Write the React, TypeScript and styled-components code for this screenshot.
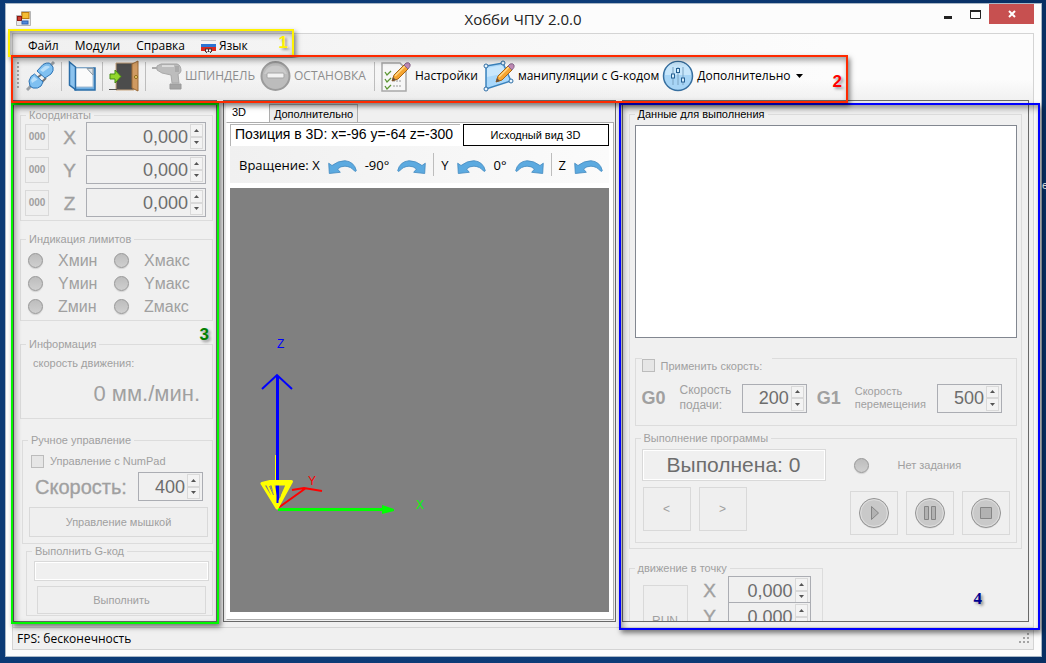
import React from "react";
import styled, { createGlobalStyle, css } from "styled-components";

const ui = `"Liberation Sans", Arial, sans-serif`;
const segoe = `"Open Sans", "Noto Sans", sans-serif`;
const face = "#f0f0f0";
const line = "#dcdcdc";
const dim = "#a0a0a0";

const GlobalStyle = createGlobalStyle`
  *, *::before, *::after { box-sizing: border-box; }
  body {
    margin: 0;
    background: linear-gradient(90deg, #0b3a75, #0d3c78 60%, #082f63);
    font: 11px/14px ${ui};
    color: #000;
  }
  button, input, textarea { font: inherit; color: inherit; border-radius: 0; margin: 0; }
  svg { display: block; flex: none; }
`;

const Desktop = styled.div`
  position: relative;
  height: 100vh;
  min-height: 640px;
  padding: 3px 4px 6px 5px;
  display: flex;
  overflow: hidden;
`;

const DesktopLabel = styled.span`
  position: absolute;
  left: calc(100% - 4px);
  top: 178px;
  color: #fff;
`;

const Window = styled.main`
  position: relative;
  flex: 1;
  min-width: 0;
  display: flex;
  flex-direction: column;
  padding: 0 7px 6px 6px;
  background: #fcfcfc;
  border: 1px solid #a9b7c6;
`;

const TitleBar = styled.header`
  display: grid;
  grid-template-columns: 100px 1fr 100px;
  height: 29px;
  flex: none;
`;

const TitleIcon = styled.span`
  padding: 7px 4px;
`;

const Title = styled.h1`
  margin: 0;
  text-align: center;
  font: 400 15px/30px ${segoe};
  color: #222;
`;

const WindowButtons = styled.div`
  display: flex;
  justify-content: flex-end;
`;

const WindowButton = styled.button<{ $close?: boolean }>`
  display: flex;
  align-items: center;
  justify-content: center;
  width: ${(p) => (p.$close ? 45 : 27)}px;
  height: 20px;
  padding: 0;
  border: 0;
  background: ${(p) => (p.$close ? "#c75050" : "transparent")};
`;

const Client = styled.div`
  flex: 1;
  min-height: 0;
  display: flex;
  flex-direction: column;
  border: 1px solid #d4d4d4;
  background: ${face};
`;

const MenuBar = styled.nav`
  position: relative;
  z-index: 3;
  display: flex;
  align-items: center;
  gap: 16px;
  height: 24px;
  flex: none;
  padding-left: 15px;
  background: linear-gradient(90deg, #f0f0f0, #fcfcfc 80%);
`;

const MenuItem = styled.button`
  display: flex;
  align-items: center;
  gap: 3px;
  padding: 0;
  border: 0;
  background: none;
  font: 12px/18px ${segoe};
`;

const ToolBar = styled.div`
  position: relative;
  z-index: 4;
  display: flex;
  align-items: flex-start;
  height: 42px;
  flex: none;
  padding: 2px 0 0 4px;
  background: linear-gradient(180deg, transparent 50%, rgba(215, 215, 215, 0.3)),
    linear-gradient(90deg, #f0f0f0, #fcfcfc 80%);
`;

const Grip = styled.span`
  width: 2px;
  height: 28px;
  margin: 2px 7px 0 0;
  background: repeating-linear-gradient(180deg, #a8a8a8 0 2px, transparent 2px 4px);
`;

const ToolButton = styled.button<{ $end?: number }>`
  display: flex;
  align-items: center;
  gap: 3px;
  height: 32px;
  padding: 0;
  margin-right: ${(p) => p.$end ?? 5}px;
  border: 0;
  background: none;
  font: 12px/18px ${segoe};
  white-space: nowrap;
  &:disabled { color: #8d8d8d; }
`;

const Separator = styled.span<{ $tall?: boolean }>`
  width: 1px;
  height: ${(p) => (p.$tall ? 29 : 23)}px;
  margin: ${(p) => (p.$tall ? "2px 6px 0 0" : "0 -1px")};
  background: #bdbdbd;
`;

const Columns = styled.div`
  flex: 1;
  min-height: 0;
  display: grid;
  grid-template-columns: 204px minmax(0, 393fr) minmax(0, 408fr);
  gap: 6px;
  padding: 0 4px 5px 0;
`;

const Cell = styled.div<{ $layer?: number }>`
  position: relative;
  z-index: ${(p) => p.$layer ?? 0};
  min-height: 0;
  display: flex;
`;

const Panel = styled.section`
  flex: 1;
  min-width: 0;
  border: 1px solid #696969;
  background: ${face};
  overflow: hidden;
`;

const SidePanel = styled(Panel)`
  display: flex;
  flex-direction: column;
  padding: 7px 3px 0 6px;
  color: ${dim};
`;

const DataPanel = styled(Panel)`
  padding: 6px;
  color: ${dim};
`;

const TabPanel = styled(Panel)`
  display: flex;
  flex-direction: column;
  padding: 2px 1px 1px 2px;
`;

const Group = styled.fieldset<{ $gap?: number; $indent?: number }>`
  display: block;
  min-width: 0;
  margin: 0 0 ${(p) => p.$gap ?? 0}px ${(p) => p.$indent ?? 0}px;
  padding: 0;
  border: 1px solid ${line};
`;

const GroupBody = styled.div<{ $pad: string }>`
  padding: ${(p) => p.$pad};
`;

const Legend = styled.legend<{ $active?: boolean }>`
  margin-left: 5px;
  padding: 0 3px;
  line-height: 14px;
  color: ${(p) => (p.$active ? "#000" : dim)};
`;

const AxisRow = styled.div`
  display: grid;
  grid-template-columns: 24px 37px 1fr;
  align-items: center;
  & + & { margin-top: 4px; }
`;

const AxisLabel = styled.label`
  font-size: 19px;
  line-height: 24px;
  text-align: center;
  padding: 3px 0 0 4px;
  -webkit-text-stroke: 0.4px ${dim};
`;

const flat = css`
  padding: 0;
  border: 1px solid #d9d9d9;
  background: #efefef;
  color: ${dim};
`;

const ZeroButton = styled.button`
  ${flat}
  height: 26px;
  font-size: 10px;
  font-weight: 700;
`;

const SpinBox = styled.span<{ $w?: number }>`
  display: flex;
  width: ${(p) => (p.$w ? `${p.$w}px` : "100%")};
  height: 29px;
  flex: none;
  padding: 1px 2px 1px 0;
  border: 1px solid #abadb3;
  background: ${face};
`;

const SpinInput = styled.input`
  flex: 1;
  width: 0;
  padding: 0 2px 0 0;
  border: 0;
  background: transparent;
  text-align: right;
  font-size: 18px;
  line-height: 24px;
  color: #6d6d6d;
`;

const SpinArrows = styled.span`
  display: grid;
  grid-template-rows: 1fr 1fr;
  width: 13px;
`;

const SpinArrow = styled.button`
  ${flat}
  display: flex;
  align-items: center;
  justify-content: center;
  min-height: 0;
  background: #f3f3f3;
`;

const LampGrid = styled.div`
  display: grid;
  grid-template-columns: 86px 1fr;
  grid-auto-rows: 23px;
`;

const Lamp = styled.span`
  display: flex;
  align-items: center;
  gap: 15px;
  font-size: 16px;
  padding-left: 7px;
`;

const LampDot = styled.i`
  width: 15px;
  height: 15px;
  flex: none;
  border: 1px solid #979797;
  border-radius: 50%;
  background: linear-gradient(180deg, #bdbdbd, #cfcfcf);
  box-shadow: 0 1px 1px #d0d0d0;
`;

const Speed = styled.output`
  display: block;
  margin-top: 12px;
  padding-bottom: 7px;
  text-align: right;
  font-size: 22px;
  line-height: 24px;
`;

const Check = styled.label`
  display: flex;
  align-items: center;
  gap: 6px;
  margin-left: 2px;
`;

const Tick = styled.input`
  appearance: none;
  width: 13px;
  height: 13px;
  border: 1px solid #bcbcbc;
  background: #e6e6e6;
`;

const SpeedRow = styled.div`
  display: flex;
  align-items: center;
  justify-content: space-between;
  margin: 4px 5px 6px 6px;
`;

const BigLabel = styled.label`
  font-size: 20px;
  line-height: 28px;
  -webkit-text-stroke: 0.3px ${dim};
`;

const WideButton = styled.button<{ $inset?: number }>`
  ${flat}
  display: block;
  width: calc(100% - ${(p) => (p.$inset ?? 0) * 2}px);
  height: ${(p) => (p.$inset ? 28 : 30)}px;
  margin: 0 ${(p) => p.$inset ?? 0}px;
`;

const TextField = styled.input`
  display: block;
  width: 100%;
  height: 20px;
  margin-bottom: 5px;
  border: 1px solid #d9d9d9;
  outline: 1px solid #fff;
  outline-offset: -2px;
  background: ${face};
`;

const Tabs = styled.div`
  display: flex;
  align-items: flex-end;
  height: 19px;
  flex: none;
`;

const Tab = styled.button<{ $on?: boolean }>`
  height: ${(p) => (p.$on ? 20 : 18)}px;
  width: ${(p) => (p.$on ? 43 : 89)}px;
  align-self: ${(p) => (p.$on ? "flex-start" : "flex-end")};
  flex: none;
  padding: ${(p) => (p.$on ? "0 0 4px 5px" : "0")};
  text-align: ${(p) => (p.$on ? "left" : "center")};
  border: 1px solid ${(p) => (p.$on ? "#fff" : "#adadad")};
  border-bottom: 0;
  background: ${(p) => (p.$on ? "#fff" : "#ececec")};
  font-size: 11px;
`;

const TabPage = styled.div`
  flex: 1;
  min-height: 0;
  display: flex;
  flex-direction: column;
  padding: 1px 4px 7px 3px;
  border: 1px solid #adadad;
  border-left-color: #fff;
  background: #fff;
`;

const PositionRow = styled.div`
  display: flex;
  gap: 3px;
  height: 22px;
  flex: none;
`;

const Position = styled.output`
  flex: 1;
  min-width: 0;
  padding-left: 4px;
  border: 1px solid #b4b4b4;
  border-right: 0;
  border-bottom: 0;
  font-size: 14px;
  line-height: 19px;
  white-space: nowrap;
  overflow: hidden;
`;

const ResetView = styled.button`
  width: 146px;
  flex: none;
  padding: 0;
  border: 1px solid #000;
  background: #fff;
`;

const RotationBar = styled.div`
  display: flex;
  align-items: center;
  gap: 8px;
  height: 37px;
  flex: none;
  padding-left: 9px;
  margin-bottom: 5px;
  background: linear-gradient(90deg, #f0f0f0, #fbfbfb);
  font: 13px/20px ${segoe};
  white-space: nowrap;
  overflow: hidden;
`;

const TurnButton = styled.button`
  padding: 6px 0 0;
  border: 0;
  background: none;
`;

const Viewport = styled.div`
  flex: 1;
  min-height: 0;
  display: flex;
  align-items: flex-end;
  background: #808080;
  overflow: hidden;
`;

const CodeArea = styled.textarea`
  display: block;
  width: 100%;
  height: 213px;
  margin: 4px 0 20px;
  border: 1px solid #828790;
  background: #fff;
  resize: none;
`;

const CheckHead = styled(Check)`
  width: 130px;
  margin: -1px 0 0 6px;
  height: 15px;
  background: ${face};
`;

const FeedRow = styled.div`
  display: flex;
  align-items: center;
  padding: 10px 14px 12px 6px;
`;

const Code = styled.b`
  width: 38px;
  font-size: 18px;
  line-height: 24px;
`;

const FeedLabel = styled.label<{ $large?: boolean }>`
  flex: ${(p) => (p.$large ? 62 : 82)} 1 0;
  min-width: 0;
  font-size: ${(p) => (p.$large ? 12 : 11)}px;
  line-height: ${(p) => (p.$large ? 15 : 13)}px;
  & + span + b { margin-left: 10px; }
`;

const RunTop = styled.div`
  display: flex;
  align-items: center;
  padding: 4px 6px 0;
`;

const Progress = styled.input`
  width: 184px;
  height: 32px;
  border: 1px solid #d9d9d9;
  outline: 1px solid #fff;
  outline-offset: -2px;
  background: ${face};
  text-align: center;
  font-size: 21px;
  color: #6d6d6d;
`;

const Task = styled.span`
  display: flex;
  align-items: center;
  gap: 29px;
  margin-left: 28px;
`;

const RunButtons = styled.div`
  display: flex;
  gap: 8px;
  padding: 6px 6px 7px 7px;
`;

const SquareButton = styled.button<{ $play?: boolean }>`
  ${flat}
  display: flex;
  align-items: center;
  justify-content: center;
  width: 48px;
  height: 44px;
  margin-top: ${(p) => (p.$play ? 4 : 0)}px;
  font-size: 12px;
`;

const Spacer = styled.span`
  flex: 1;
`;

const MoveGroup = styled(Group)`
  width: 194px;
`;

const MoveGrid = styled.div`
  display: grid;
  grid-template-columns: 45px 40px 83px;
  grid-auto-rows: 26px;
  padding: 1px 0 0 13px;
`;

const RunButton = styled.button`
  ${flat}
  grid-row: span 3;
  margin-top: 9px;
  height: 72px;
  font-size: 12px;
`;

const StatusBar = styled.footer`
  display: flex;
  align-items: center;
  justify-content: space-between;
  height: 22px;
  flex: none;
  padding: 0 2px 0 4px;
  border-top: 1px solid #d4d4d4;
  font: 12px/18px ${segoe};
`;

const Frame = styled.div<{ $color: string; $box: string; $w?: number }>`
  position: absolute;
  inset: ${(p) => p.$box};
  width: ${(p) => (p.$w ? `${p.$w}px` : "auto")};
  z-index: 5;
  border: 2px solid ${(p) => p.$color};
  box-shadow: 2px 3px 5px rgba(0, 0, 0, 0.5), inset 2px 3px 6px rgba(0, 0, 0, 0.4);
  pointer-events: none;
`;

const Mark = styled.b<{ $color: string; $at: string; $serif?: boolean }>`
  position: absolute;
  inset: ${(p) => p.$at};
  color: ${(p) => p.$color};
  font: 700 17px/18px ${(p) => (p.$serif ? `"Liberation Serif", serif` : ui)};
  text-shadow: 2px 2px 3px rgba(0, 0, 0, 0.4);
`;

function Spin({ id, value, w }: { id: string; value: string; w?: number }) {
  return (
    <SpinBox $w={w}>
      <SpinInput id={id} defaultValue={value} disabled />
      <SpinArrows>
        <SpinArrow disabled aria-label="Больше">
          <svg width="5" height="3"><path d="M0 3 2.5 0 5 3z" fill="#555" /></svg>
        </SpinArrow>
        <SpinArrow disabled aria-label="Меньше">
          <svg width="5" height="3"><path d="M0 0 2.5 3 5 0z" fill="#555" /></svg>
        </SpinArrow>
      </SpinArrows>
    </SpinBox>
  );
}

const AppIcon = () => (
  <svg width="15" height="15" viewBox="0 0 15 15">
    <path d="M.5 4.500h5v-4h9v14H.5z" fill="#e8e8e8" stroke="#b5b5b5" />
    <rect x="6" y="1.500" width="7" height="6" fill="#f5bd34" stroke="#bd7b10" />
    <rect x="1.500" y="5.500" width="4" height="4" fill="#cf3d30" stroke="#8d1710" />
    <rect x="6" y="10" width="6" height="3" fill="#4f8ade" stroke="#2f5fae" />
  </svg>
);

const FlagIcon = () => (
  <svg width="15" height="13" viewBox="0 0 15 13">
    <path d="M0 0h15v4H0z" fill="#f3f3f3" />
    <path d="M0 .500h15" stroke="#c9c9c9" />
    <path d="M0 4h15v3H0z" fill="#2b73d2" />
    <path d="M0 7h15v4H0z" fill="#d9291f" />
    <path d="M4 8.500h7v3.500h-1v1H9v-1H6v1H5v-1H4z" fill="#4a3030" />
    <path d="M5 9.500h2v2H5zM8 9.500h2v2H8z" fill="#fff" />
  </svg>
);

const PlugIcon = () => (
  <svg width="30" height="32" viewBox="0 0 30 32">
    <path d="m1 30 4-4M24 6l4-4" stroke="#9a9fa4" strokeWidth="3" />
    <path d="m11 18 5-4M16 22l4-4" stroke="#6f7478" strokeWidth="2" />
    <path d="M11 11 17 4.500q3-2 6.500-1.500L27 7q1 4-2 7l-6 4z" fill="#7fc0f1" stroke="#2e74b5" />
    <path d="m14 10 5-4q3-1 5 1l-7 5z" fill="#b9dffa" />
    <path d="m3 21 2-4.500L8.500 14l8.500 8-2 4q-3 3-8 2l-3-2z" fill="#7fc0f1" stroke="#2e74b5" />
    <path d="m5 20 3-3.500 3.500 3L6 23z" fill="#b9dffa" />
  </svg>
);

const BookIcon = () => (
  <svg width="29" height="32" viewBox="0 0 29 32">
    <path d="M3 8h24v22H7z" fill="#6cade2" stroke="#2a6da8" strokeWidth="1.500" />
    <path d="M7 8h18v19H7z" fill="#fbfbfb" stroke="#a5bdd2" />
    <path d="M19 8.500h6V15z" fill="#dfe4e8" stroke="#8b98a3" />
    <path d="m1.500 2 6 5v22.500l-6-4.500z" fill="#8cc3ee" stroke="#2a6da8" strokeWidth="1.500" />
  </svg>
);

const DoorIcon = () => (
  <svg width="31" height="32" viewBox="0 0 31 32">
    <path d="M7 3h18v27H7z" fill="#4c4c4c" stroke="#c9a57f" />
    <path d="m23 4 6-3v30l-6-3z" fill="#d09a61" stroke="#9a6a38" />
    <circle cx="27" cy="17" r="1.500" fill="#ffe080" stroke="#8a6414" />
    <path d="M0 29.500h8" stroke="#555" />
    <path d="M1 14h5v-4l6 6.500-6 6.500v-4H1z" fill="#92d62c" stroke="#458b12" />
  </svg>
);

const DrillIcon = () => (
  <svg width="30" height="32" viewBox="0 0 30 32">
    <path d="M0 8h6" stroke="#aaa" strokeWidth="2" />
    <path d="M5 6l4-2h16q4 1 4 7-1 3-3 3l1 9h-7l-1-8-9-2-5-3z" fill="#bdbdbd" stroke="#a9a9a9" />
    <path d="M10 6h12" stroke="#dedede" strokeWidth="2" />
    <path d="M18 24h11v5H18z" fill="#a4a4a4" stroke="#999" />
    <path d="M24 6v6M26 6v6" stroke="#999" />
  </svg>
);

const StopIcon = () => (
  <svg width="31" height="32" viewBox="0 0 31 32">
    <circle cx="15.500" cy="16" r="14" fill="#bcbcbc" stroke="#9b9b9b" strokeWidth="2" />
    <path d="M4 14a12 12 0 0 1 23 0z" fill="#cacaca" />
    <rect x="7" y="13" width="17" height="5" rx="1" fill="#f2f2f2" stroke="#a5a5a5" />
  </svg>
);

const Pencil = ({ x, y }: { x: number; y: number }) => (
  <g transform={`translate(${x} ${y})`}>
    <path d="M0 19l2-6L12 3l4 4L6 17z" fill="#f6a42f" stroke="#a66414" />
    <path d="M3 14 13 4" stroke="#ffd98a" strokeWidth="1.500" />
    <path d="m12 3 2-2q3-1 4 1 1 2-2 5z" fill="#c08ab5" stroke="#86688a" />
    <path d="m0 19 1-4 3 3z" fill="#665040" />
  </g>
);

const ChecklistIcon = () => (
  <svg width="31" height="32" viewBox="0 0 31 32">
    <path d="M1 3h18l6 6v22H1z" fill="#f7f7f7" stroke="#a8a8a8" strokeWidth="1.500" />
    <path d="m4 12 2 3 4-4M4 19l2 3 4-4M4 26l2 3 4-4" fill="none" stroke="#5c9632" strokeWidth="1.300" />
    <path d="M12 21h9M12 26h9" stroke="#999" strokeDasharray="2 1" />
    <Pencil x={11} y={2} />
  </svg>
);

const PolygonIcon = () => (
  <svg width="32" height="32" viewBox="0 0 32 32">
    <path d="M3 6 20 3l8 18L3 29z" fill="#a9d8fb" stroke="#3b83bd" strokeWidth="1.500" />
    <path d="m4 8 15-3 4 8L4 17z" fill="#c8e7fd" />
    <g fill="#eaf6ff" stroke="#2f6ea5">
      <circle cx="3" cy="6" r="2" /><circle cx="20" cy="3" r="2" />
      <circle cx="28" cy="21" r="2" /><circle cx="3" cy="29" r="2" />
    </g>
    <Pencil x={13} y={3} />
  </svg>
);

const SlidersIcon = () => (
  <svg width="32" height="32" viewBox="0 0 32 32">
    <circle cx="16" cy="16" r="14.500" fill="#a7d5f6" stroke="#376f9f" strokeWidth="1.500" />
    <path d="M3 15a13 13 0 0 1 26 0z" fill="#c7e6fb" />
    <path d="M11 7v18M16 7v18M21 7v18" stroke="#7ba3c2" />
    <g fill="#d8effd" stroke="#255f91">
      <rect x="9.500" y="14" width="3" height="4" /><rect x="14.500" y="8.500" width="3" height="4" />
      <rect x="19.500" y="18" width="3" height="4" />
    </g>
  </svg>
);

const TurnIcon = ({ flip }: { flip?: boolean }) => (
  <svg width="29" height="15" viewBox="0 0 29 15">
    <path
      transform={flip ? "matrix(-1 0 0 1 29 0)" : undefined}
      d="M.7 3.200 4 5.500Q10 .700 17 .700q9 .800 11.300 9.800-.3 1.500-1.800.5Q23 6.500 17 6.200q-4.500-.1-7.500 2.800l2.800 3.300-11 1.200z"
      fill="#5caae0" stroke="#4389bf" strokeWidth="0.800"
    />
  </svg>
);

const PlayerIcon = ({ kind }: { kind: "play" | "pause" | "stop" }) => (
  <svg width="32" height="32" viewBox="0 0 32 32">
    <circle cx="16" cy="17" r="14.500" fill="#d5d5d5" />
    <circle cx="16" cy="16" r="14.500" fill="#c9c9c9" stroke="#949494" />
    <circle cx="16" cy="16" r="13.300" fill="none" stroke="#dedede" />
    <g fill="#b2b2b2" stroke="#858585">
      {kind === "play" && <path d="M13.500 9.500v13l7-6.500z" />}
      {kind === "pause" && <path d="M10.500 9.500h4v13h-4zM17.500 9.500h4v13h-4z" />}
      {kind === "stop" && <path d="M10.500 10.500h11v11h-11z" />}
    </g>
  </svg>
);

const Axes = () => (
  <svg width="378" height="424" viewBox="0 0 378 424" fontFamily="Liberation Sans" fontSize="12">
    <path d="M47.500 188v132" stroke="#00f" strokeWidth="3" />
    <path d="m32 201 15-14 15 14" fill="none" stroke="#00f" strokeWidth="2" />
    <path d="m48 320 28-20M62 302l12-2 18 3" fill="none" stroke="#f00" strokeWidth="2" />
    <path d="M48 321.500h106" stroke="#0f0" strokeWidth="3" />
    <path d="m152 317 12 4v2l-12 3z" fill="#0f0" />
    <path d="M45.500 267v28" stroke="#ff0" />
    <path
      d="M32 295.500 40 293.500H61.500L47 320zM33 296h28M38 297l9 20M43 297l4 17M57 297l-9 20"
      fill="none" stroke="#ff0" strokeWidth="3" strokeLinejoin="round"
    />
    <path d="M39.500 298l4 9M52.500 299l-3 11" stroke="#808080" />
    <path d="M47.500 299v16" stroke="#00f" strokeWidth="2" />
    <text x="47" y="160" fill="#00f">Z</text>
    <text x="78" y="297" fill="#f00">Y</text>
    <text x="186" y="321" fill="#0f0">X</text>
  </svg>
);

export default function App() {
  return (
    <Desktop>
      <GlobalStyle />
      <DesktopLabel>е</DesktopLabel>
      <Window>
        <TitleBar>
          <TitleIcon><AppIcon /></TitleIcon>
          <Title>Хобби ЧПУ 2.0.0</Title>
          <WindowButtons>
            <WindowButton aria-label="Свернуть">
              <svg width="9" height="11"><path d="M0 8.500h8" stroke="#222" strokeWidth="3" /></svg>
            </WindowButton>
            <WindowButton aria-label="Развернуть">
              <svg width="11" height="9"><path d="M.5 1v7.500h10V1" fill="none" stroke="#222" /><path d="M0 1h11" stroke="#222" strokeWidth="2" /></svg>
            </WindowButton>
            <WindowButton $close aria-label="Закрыть">
              <svg width="8" height="8"><path d="m1 1 6 6m0-6L1 7" stroke="#fff" strokeWidth="2" /></svg>
            </WindowButton>
          </WindowButtons>
        </TitleBar>

        <Client>
          <MenuBar>
            <MenuItem>Файл</MenuItem>
            <MenuItem>Модули</MenuItem>
            <MenuItem>Справка</MenuItem>
            <MenuItem><FlagIcon />Язык</MenuItem>
            <Frame $color="#fff200" $box="-5px auto 1px -5px" $w={286}>
              <Mark $color="#fff200" $at="3px 4px auto auto">1</Mark>
            </Frame>
          </MenuBar>

          <ToolBar>
            <Grip />
            <ToolButton aria-label="Подключить"><PlugIcon /></ToolButton>
            <Separator $tall />
            <ToolButton aria-label="Журнал"><BookIcon /></ToolButton>
            <Separator $tall />
            <ToolButton aria-label="Выход"><DoorIcon /></ToolButton>
            <Separator $tall />
            <ToolButton disabled><DrillIcon />ШПИНДЕЛЬ</ToolButton>
            <ToolButton disabled $end={8}><StopIcon />ОСТАНОВКА</ToolButton>
            <Separator $tall />
            <ToolButton><ChecklistIcon />Настройки</ToolButton>
            <ToolButton $end={3}><PolygonIcon />манипуляции с G-кодом</ToolButton>
            <ToolButton>
              <SlidersIcon />Дополнительно
              <svg width="9" height="4"><path d="M2 0h7L5.500 4z" fill="#000" /></svg>
            </ToolButton>
            <Frame $color="#ff2a00" $box="-3px auto -3px -2px" $w={837}>
              <Mark $color="#f00" $at="16px 4px auto auto">2</Mark>
            </Frame>
          </ToolBar>

          <Columns>
            <Cell $layer={1}>
              <SidePanel>
                <Group $gap={11}>
                  <Legend>Координаты</Legend>
                  <GroupBody $pad="0 6px 3px 4px">
                    {["X", "Y", "Z"].map((a) => (
                      <AxisRow key={a}>
                        <ZeroButton disabled>000</ZeroButton>
                        <AxisLabel htmlFor={`pos${a}`}>{a}</AxisLabel>
                        <Spin id={`pos${a}`} value="0,000" />
                      </AxisRow>
                    ))}
                  </GroupBody>
                </Group>
                <Group $gap={16}>
                  <Legend>Индикация лимитов</Legend>
                  <GroupBody $pad="3px 0 2px">
                    <LampGrid>
                      {["Xмин", "Xмакс", "Yмин", "Yмакс", "Zмин", "Zмакс"].map((t) => (
                        <Lamp key={t}><LampDot />{t}</Lamp>
                      ))}
                    </LampGrid>
                  </GroupBody>
                </Group>
                <Group $gap={14}>
                  <Legend>Информация</Legend>
                  <GroupBody $pad="5px 12px">
                    <span>скорость движения:</span>
                    <Speed>0 мм./мин.</Speed>
                  </GroupBody>
                </Group>
                <Group $indent={2}>
                  <Legend>Ручное управление</Legend>
                  <GroupBody $pad="7px 4px 6px 6px">
                    <Check><Tick type="checkbox" disabled />Управление с NumPad</Check>
                    <SpeedRow>
                      <BigLabel htmlFor="speed">Скорость:</BigLabel>
                      <Spin id="speed" value="400" w={65} />
                    </SpeedRow>
                    <WideButton disabled>Управление мышкой</WideButton>
                  </GroupBody>
                </Group>
                <Group $indent={6}>
                  <Legend>Выполнить G-код</Legend>
                  <GroupBody $pad="3px 3px 1px 7px">
                    <TextField disabled aria-label="G-код" />
                    <WideButton $inset={3} disabled>Выполнить</WideButton>
                  </GroupBody>
                </Group>
              </SidePanel>
              <Frame $color="#00f800" $box="3px -2px -2px -2px">
                <Mark $color="#008000" $at="221px 8px auto auto">3</Mark>
              </Frame>
            </Cell>

            <Cell>
              <TabPanel>
                <Tabs>
                  <Tab $on>3D</Tab>
                  <Tab>Дополнительно</Tab>
                </Tabs>
                <TabPage>
                  <PositionRow>
                    <Position>Позиция в 3D: x=-96 y=-64 z=-300</Position>
                    <ResetView>Исходный вид 3D</ResetView>
                  </PositionRow>
                  <RotationBar>
                    <span>Вращение: X</span>
                    <TurnButton aria-label="X влево"><TurnIcon /></TurnButton>
                    <span>-90°</span>
                    <TurnButton aria-label="X вправо"><TurnIcon flip /></TurnButton>
                    <Separator />
                    <span>Y</span>
                    <TurnButton aria-label="Y влево"><TurnIcon /></TurnButton>
                    <span>0°</span>
                    <TurnButton aria-label="Y вправо"><TurnIcon flip /></TurnButton>
                    <Separator />
                    <span>Z</span>
                    <TurnButton aria-label="Z влево"><TurnIcon /></TurnButton>
                  </RotationBar>
                  <Viewport><Axes /></Viewport>
                </TabPage>
              </TabPanel>
            </Cell>

            <Cell $layer={2}>
              <DataPanel>
                <Group $gap={12}>
                  <Legend $active>Данные для выполнения</Legend>
                  <GroupBody $pad="0 4px 5px 5px">
                    <CodeArea aria-label="Данные для выполнения" />
                    <Group $gap={5} aria-label="Скорость">
                      <CheckHead><Tick type="checkbox" disabled />Применить скорсть:</CheckHead>
                      <FeedRow>
                        <Code>G0</Code>
                        <FeedLabel $large htmlFor="g0">Скорость<br />подачи:</FeedLabel>
                        <Spin id="g0" value="200" w={65} />
                        <Code>G1</Code>
                        <FeedLabel htmlFor="g1">Скорость<br />перемещения</FeedLabel>
                        <Spin id="g1" value="500" w={65} />
                      </FeedRow>
                    </Group>
                    <Group>
                      <Legend>Выполнение программы</Legend>
                      <RunTop>
                        <Progress disabled defaultValue="Выполнена: 0" aria-label="Выполнена" />
                        <Task><LampDot />Нет задания</Task>
                      </RunTop>
                      <RunButtons>
                        <SquareButton disabled>&lt;</SquareButton>
                        <SquareButton disabled>&gt;</SquareButton>
                        <Spacer />
                        <SquareButton $play disabled aria-label="Пуск"><PlayerIcon kind="play" /></SquareButton>
                        <SquareButton $play disabled aria-label="Пауза"><PlayerIcon kind="pause" /></SquareButton>
                        <SquareButton $play disabled aria-label="Стоп"><PlayerIcon kind="stop" /></SquareButton>
                      </RunButtons>
                    </Group>
                  </GroupBody>
                </Group>
                <MoveGroup>
                  <Legend>движение в точку</Legend>
                  <MoveGrid>
                    <RunButton disabled>RUN</RunButton>
                    <AxisLabel htmlFor="moveX">X</AxisLabel>
                    <Spin id="moveX" value="0,000" />
                    <AxisLabel htmlFor="moveY">Y</AxisLabel>
                    <Spin id="moveY" value="0,000" />
                  </MoveGrid>
                </MoveGroup>
              </DataPanel>
              <Frame $color="#0000ff" $box="3px -11px -8px -3px">
                <Mark $color="#000090" $at="auto 56px 20px auto" $serif>4</Mark>
              </Frame>
            </Cell>
          </Columns>

          <StatusBar>
            <span>FPS: бесконечность</span>
            <svg width="12" height="12" fill="#a5a5a5">
              <path d="M8 0h2v2H8zM4 4h2v2H4zM8 4h2v2H8zM0 8h2v2H0zM4 8h2v2H4zM8 8h2v2H8z" />
            </svg>
          </StatusBar>
        </Client>
      </Window>
    </Desktop>
  );
}
